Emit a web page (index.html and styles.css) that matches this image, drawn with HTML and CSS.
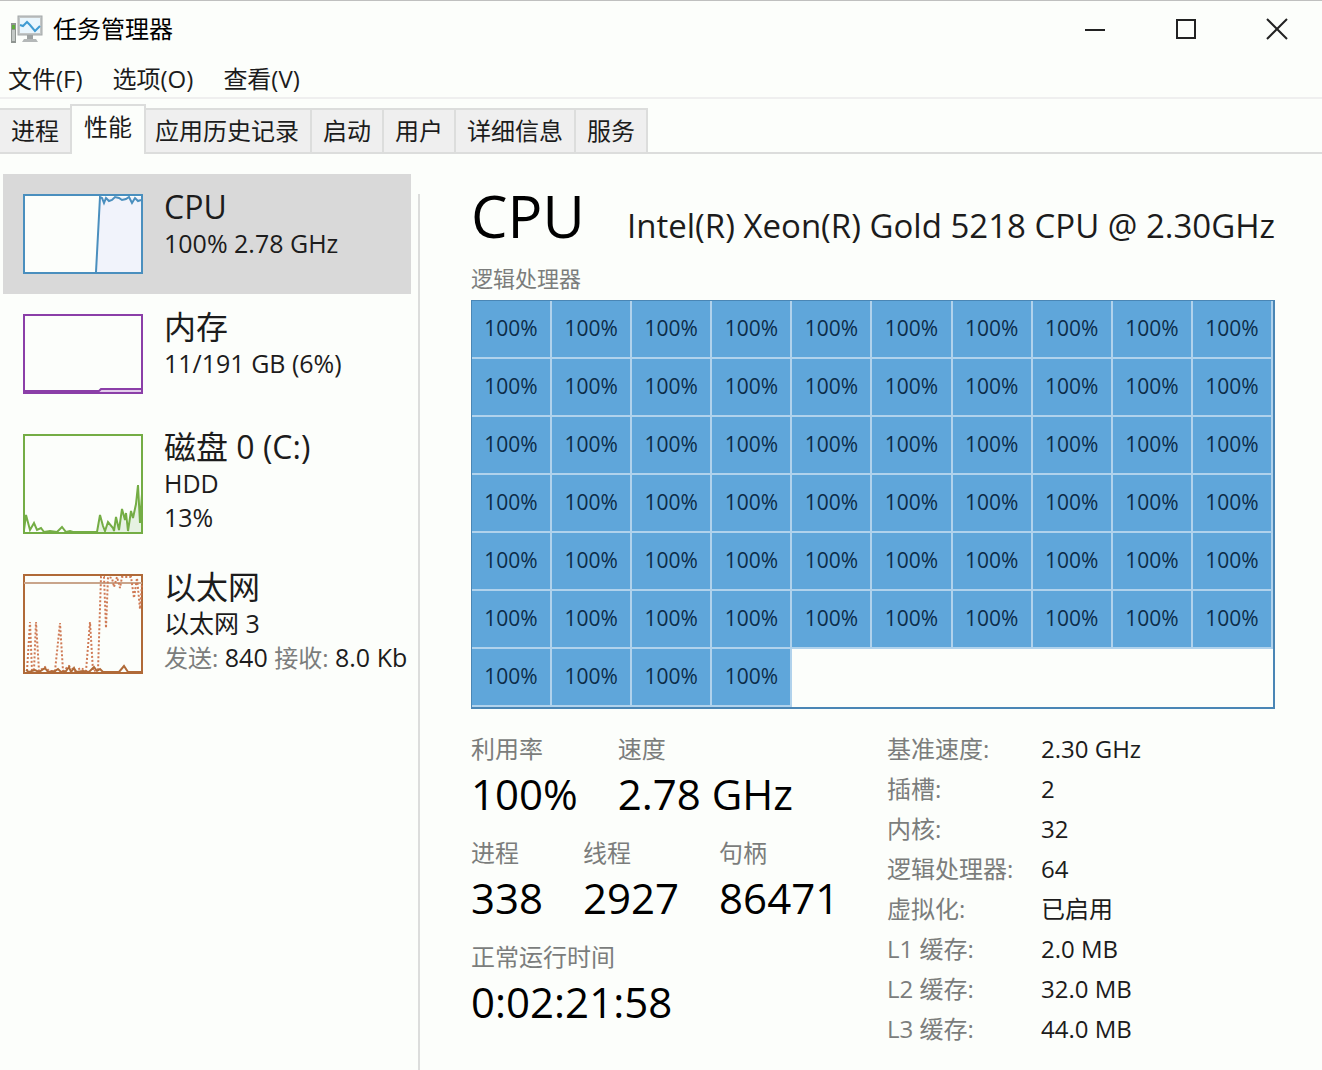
FILE: index.html
```html
<!DOCTYPE html>
<html lang="zh-CN">
<head>
    <meta charset="UTF-8">
    <meta name="viewport" content="width=device-width, initial-scale=1.0">
    <title>任务管理器</title>
    <link rel="stylesheet" href="styles.css">
</head>
<body>
    <header class="title-bar">
        <svg class="app-icon" viewBox="0 0 32 28" aria-hidden="true">
            <rect x="0" y="8" width="5" height="20" fill="#8f9591"/>
            <rect x="1" y="10" width="3" height="4" fill="#5fae3c"/>
            <rect x="1" y="15" width="3" height="11" fill="#c3c8c5"/>
            <rect x="7" y="1" width="24" height="19" fill="#c2c6c6" stroke="#a3a8a9"/>
            <rect x="9" y="3" width="20" height="15" fill="#e9f6fd"/>
            <path d="M9 10l3 1 4-4 3 3 5 6 5-5" fill="none" stroke="#3f9bd2" stroke-width="2"/>
            <path d="M16 20h6v4h-6z" fill="#9da2a2"/>
            <path d="M13 24h12l2 3H11z" fill="#b4b8b8"/>
        </svg>
        <h1>任务管理器</h1>
        <div class="window-buttons">
            <button aria-label="最小化"><svg viewBox="0 0 22 22"><path d="M1 12h20"/></svg></button>
            <button aria-label="最大化"><svg viewBox="0 0 22 22"><path d="M2 2h18v18H2z"/></svg></button>
            <button aria-label="关闭"><svg viewBox="0 0 22 22"><path d="M1 1l20 20M21 1L1 21"/></svg></button>
        </div>
    </header>

    <nav class="menu">
        <button>文件(F)</button>
        <button>选项(O)</button>
        <button>查看(V)</button>
    </nav>

    <div class="tabs" role="tablist">
        <button class="tab" role="tab">进程</button>
        <button class="tab selected" role="tab" aria-selected="true">性能</button>
        <button class="tab" role="tab">应用历史记录</button>
        <button class="tab" role="tab">启动</button>
        <button class="tab" role="tab">用户</button>
        <button class="tab" role="tab">详细信息</button>
        <button class="tab" role="tab">服务</button>
    </div>

    <main class="content">
        <div class="sidebar">
            <button class="item selected">
                <svg class="graph cpu" viewBox="0 0 120 80">
                    <rect class="frame" x="1" y="1" width="118" height="78"/>
                    <path class="fill" d="M73 78L77 3H118V78z"/>
                    <path class="line" d="M73 78L77 3L79 4L81 9L83 4L86 7L89 6L92 3L96 4L99 6L103 5L106 3L109 9L112 4L115 7L118 6"/>
                </svg>
                <span class="info">
                    <span class="name">CPU</span>
                    <span>100% 2.78 GHz</span>
                </span>
            </button>
            <button class="item">
                <svg class="graph memory" viewBox="0 0 120 80">
                    <rect class="frame" x="1" y="1" width="118" height="78"/>
                    <path class="fill" d="M77 75H118V78H77z"/>
                    <path class="line" d="M1 77H76L78 75H118"/>
                </svg>
                <span class="info">
                    <span class="name">内存</span>
                    <span>11/191 GB (6%)</span>
                </span>
            </button>
            <button class="item">
                <svg class="graph disk" viewBox="0 0 120 100">
                    <rect class="frame" x="1" y="1" width="118" height="98"/>
                    <path class="fill" d="M74 98L77 81L82 97L85 88L90 94L93 83L96 96L99 75L105 97L108 77L110 83L115 51L118 89V98z"/>
                    <path class="line" d="M1 96L3 81L7 96L11 89L14 96L18 94L21 98L27 97L34 98L39 93L43 98L47 97L50 98H74L77 81L80 92L82 97L85 88L90 94L91 97L93 83L96 96L99 75L102 86L103 79L105 97L108 77L110 84L113 70L115 51L117 89L119 60"/>
                </svg>
                <span class="info">
                    <span class="name">磁盘 0 (C:)</span>
                    <span>HDD</span>
                    <span>13%</span>
                </span>
            </button>
            <button class="item">
                <svg class="graph network" viewBox="0 0 120 100">
                    <rect class="frame" x="1" y="1" width="118" height="98"/>
                    <path class="scale" d="M1 9H119"/>
                    <path class="dotted" d="M4 97L7 48L9 97L11 96L13 48L16 97L22 93L26 97H32L37 49L40 97L46 92L52 97L58 94L63 97L67 48L70 97L75 96L78 3L81 3L83 54L85 3L89 4L91 13L94 3L97 14L99 3L108 3L111 24L114 4L117 35L119 10"/>
                    <path class="line" d="M3 96L6 98L12 96L16 98L22 94L25 98L32 97L35 95L38 98L43 97L46 93L48 98L51 94L53 98L60 97L66 98L71 93L74 97L77 95L80 98H96L101 92L105 98H118"/>
                </svg>
                <span class="info">
                    <span class="name">以太网</span>
                    <span>以太网 3</span>
                    <span><i>发送:</i> 840 <i>接收:</i> 8.0 Kb</span>
                </span>
            </button>
        </div>

        <section class="details">
            <div class="heading">
                <h2>CPU</h2>
                <span class="model">Intel(R) Xeon(R) Gold 5218 CPU @ 2.30GHz</span>
            </div>
            <p class="caption">逻辑处理器</p>
            <div class="processors" id="processors"></div>

            <div class="stats">
                <div class="counters">
                    <dl>
                        <div><dt>利用率</dt><dd>100%</dd></div>
                        <div><dt>速度</dt><dd>2.78 GHz</dd></div>
                    </dl>
                    <dl>
                        <div><dt>进程</dt><dd>338</dd></div>
                        <div><dt>线程</dt><dd>2927</dd></div>
                        <div><dt>句柄</dt><dd>86471</dd></div>
                    </dl>
                    <dl>
                        <div><dt>正常运行时间</dt><dd>0:02:21:58</dd></div>
                    </dl>
                </div>
                <table class="specs">
                    <tr><th>基准速度:</th><td>2.30 GHz</td></tr>
                    <tr><th>插槽:</th><td>2</td></tr>
                    <tr><th>内核:</th><td>32</td></tr>
                    <tr><th>逻辑处理器:</th><td>64</td></tr>
                    <tr><th>虚拟化:</th><td>已启用</td></tr>
                    <tr><th>L1 缓存:</th><td>2.0 MB</td></tr>
                    <tr><th>L2 缓存:</th><td>32.0 MB</td></tr>
                    <tr><th>L3 缓存:</th><td>44.0 MB</td></tr>
                </table>
            </div>
        </section>
    </main>

    <script>
        const processors = document.getElementById('processors');
        const usage = new Array(64).fill(100);

        usage.forEach(value => {
            const cell = document.createElement('div');
            cell.className = 'processor';
            cell.textContent = value + '%';
            processors.appendChild(cell);
        });
    </script>
</body>
</html>
```
FILE: styles.css
```css
:root {
    --bg: #fcfefb;
    --border: #dcdddc;
    --text: #1c1c1c;
    --muted: #7b7d7c;
    --cpu: #4a8fbe;
    --memory: #8b3fa8;
    --disk: #74ad45;
    --network: #b06a38;
}

* {
    margin: 0;
    padding: 0;
    box-sizing: border-box;
}

body {
    min-height: 100vh;
    display: flex;
    flex-direction: column;
    background: var(--bg);
    color: var(--text);
    font-family: "Open Sans", "Noto Sans CJK SC", sans-serif;
    font-size: 24px;
    line-height: 34px;
    border-top: 1px solid #bfc0bf;
}

button {
    font: inherit;
    color: inherit;
    background: none;
    border: none;
}

.title-bar {
    height: 56px;
    display: flex;
    align-items: center;
    padding-left: 11px;
}

.app-icon {
    width: 32px;
    height: 28px;
    margin-right: 10px;
}

h1 {
    font-size: 24px;
    font-weight: 400;
    color: #000;
}

.window-buttons {
    display: flex;
    margin-left: auto;
}

.window-buttons button {
    width: 91px;
    height: 56px;
    display: flex;
    align-items: center;
    justify-content: center;
}

.window-buttons svg {
    width: 22px;
    height: 22px;
    fill: none;
    stroke: #222;
    stroke-width: 2;
}

.menu {
    display: flex;
    gap: 30px;
    height: 42px;
    align-items: center;
    padding: 4px 0 0 8px;
    border-bottom: 2px solid #efefef;
}

.tabs {
    display: flex;
    align-items: flex-end;
    height: 55px;
    border-bottom: 2px solid var(--border);
}

.tab {
    height: 44px;
    padding: 0 11px;
    background: #efefef;
    border-top: 2px solid var(--border);
    border-right: 2px solid var(--border);
}

.tab.selected {
    height: 50px;
    margin: 0 -2px -2px;
    padding: 0 12px 6px;
    background: var(--bg);
    border-left: 2px solid var(--border);
    z-index: 1;
}

.content {
    flex: 1;
    display: flex;
}

.sidebar {
    flex: 0 0 418px;
    padding: 20px 0 0 3px;
    overflow: hidden;
}

.item {
    display: flex;
    align-items: flex-start;
    width: 408px;
    padding: 0 0 20px 20px;
    font-size: 25px;
    text-align: left;
    white-space: nowrap;
}

.item.selected {
    background: #d9d9d9;
}

.graph {
    flex: none;
    width: 120px;
    margin: 20px 21px 0 0;
    background: var(--bg);
    fill: none;
    stroke-width: 2;
}

.cpu { stroke: var(--cpu); }
.memory { stroke: var(--memory); }
.disk { stroke: var(--disk); }
.network { stroke: var(--network); }

.graph .fill {
    stroke: none;
}

.cpu .fill { fill: #f1f3fb; }
.memory .fill { fill: #e3cdec; }
.disk .fill { fill: #e6f2e2; }

.network .scale {
    stroke: #c9a58b;
}

.network .dotted {
    stroke: #cf7a55;
    stroke-dasharray: 2 2;
}

.info {
    display: flex;
    flex-direction: column;
    height: 86px;
    padding-top: 14px;
}

.name {
    font-size: 32px;
    line-height: 38px;
}

.info i {
    font-size: 24px;
    font-style: normal;
    color: var(--muted);
}

.details {
    flex: 1;
    margin-top: 40px;
    padding: 0 47px 20px 51px;
    border-left: 2px solid var(--border);
}

.heading {
    display: flex;
    align-items: baseline;
    justify-content: space-between;
    height: 44px;
    line-height: 44px;
}

h2 {
    font-size: 58px;
    font-weight: 400;
    color: #000;
}

.model {
    font-size: 33px;
}

.caption {
    margin: 24px 0 6px;
    font-size: 22px;
    line-height: 32px;
    color: var(--muted);
}

.processors {
    display: grid;
    grid-template-columns: repeat(10, 1fr);
    border: solid #4a86b5;
    border-width: 1px 2px 2px 1px;
}

.processor {
    height: 58px;
    background: #5fa6da;
    border: solid #b0d2ec;
    border-width: 0 2px 2px 0;
    color: #0c2c48;
    font-size: 21px;
    line-height: 54px;
    text-align: center;
}

.stats {
    display: flex;
    margin-top: 20px;
}

.counters {
    flex: 0 0 416px;
    padding-top: 4px;
}

dl {
    display: flex;
    gap: 40px;
    margin-bottom: 14px;
}

dt {
    line-height: 32px;
    color: var(--muted);
}

dd {
    font-size: 42px;
    line-height: 58px;
    color: #000;
    white-space: nowrap;
}

.specs {
    border-collapse: collapse;
}

.specs th {
    width: 154px;
    font-weight: 400;
    text-align: left;
    color: var(--muted);
}

.specs td,
.specs th {
    height: 40px;
}
```
